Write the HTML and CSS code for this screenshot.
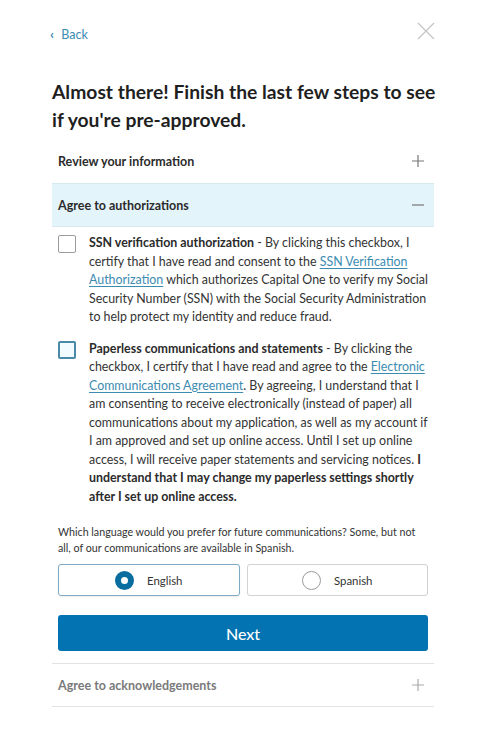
FILE: index.html
```html
<!DOCTYPE html>
<html lang="en">
<head>
<meta charset="utf-8">
<title>Almost there</title>
<link rel="stylesheet" href="styles.css">
</head>
<body>
<div class="page">
  <div class="topbar">
    <a class="back" href="#"><span class="chev">&#8249;</span> Back</a>
    <svg class="close" width="18" height="18" viewBox="0 0 18 18"><path d="M1 1 L17 17 M17 1 L1 17" stroke="#c4c4c4" stroke-width="1.2" fill="none"/></svg>
  </div>
  <h1 class="title">Almost there! Finish the last few steps to see if you're pre-approved.</h1>

  <div class="acc-row">
    <span class="acc-title">Review your information</span>
    <svg class="acc-icon" width="12" height="12" viewBox="0 0 12 12"><path d="M6 0 V12 M0 6 H12" stroke="#777" stroke-width="1.2"/></svg>
  </div>
  <div class="acc-row open">
    <span class="acc-title">Agree to authorizations</span>
    <svg class="acc-icon" width="12" height="12" viewBox="0 0 12 12"><path d="M0 6 H12" stroke="#777" stroke-width="1.2"/></svg>
  </div>

  <div class="acc-body">
    <div class="check-item">
      <span class="box"></span>
      <p class="check-text"><b>SSN verification authorization</b> - By clicking this checkbox, I certify that I have read and consent to the <a href="#">SSN Verification Authorization</a> which authorizes Capital One to verify my Social Security Number (SSN) with the Social Security Administration to help protect my identity and reduce fraud.</p>
    </div>
    <div class="check-item">
      <span class="box focus"></span>
      <p class="check-text"><b>Paperless communications and statements</b> - By clicking the checkbox, I certify that I have read and agree to the <a href="#">Electronic Communications Agreement</a>. By agreeing, I understand that I am consenting to receive electronically (instead of paper) all communications about my application, as well as my account if I am approved and set up online access. Until I set up online access, I will receive paper statements and servicing notices. <b>I understand that I may change my paperless settings shortly after I set up online access.</b></p>
    </div>

    <p class="question">Which language would you prefer for future communications? Some, but not all, of our communications are available in Spanish.</p>
    <div class="radios">
      <div class="radio selected"><span class="dot"></span><span class="rlabel">English</span></div>
      <div class="radio"><span class="dot"></span><span class="rlabel">Spanish</span></div>
    </div>
    <button class="next">Next</button>
  </div>

  <div class="acc-row closed">
    <span class="acc-title muted">Agree to acknowledgements</span>
    <svg class="acc-icon" width="12" height="12" viewBox="0 0 12 12"><path d="M6 0 V12 M0 6 H12" stroke="#aaa" stroke-width="1.2"/></svg>
  </div>
</div>
</body>
</html>
```

FILE: styles.css
```css
* { box-sizing: border-box; }
html, body { margin: 0; padding: 0; background: #fff; }
body {
  font-family: Lato, "Open Sans", sans-serif;
  color: #2b2b2b;
}
.page {
  width: 382px;
  margin-left: 52px;
}
.topbar {
  height: 62px;
  display: flex;
  justify-content: space-between;
  align-items: flex-start;
  padding-top: 21px;
}
.back {
  color: #3c8bb1;
  text-decoration: none;
  font-size: 12.5px;
  line-height: 26px;
  margin-left: -2px;
}
.chev { font-size: 14px; font-weight: bold; margin-right: 4px; }
.close { margin-right: -1px; margin-top: 1px; }
.title {
  margin: 16px -8px 5px 0;
  font-size: 19.3px;
  line-height: 28px;
  font-weight: 700;
  color: #1f1f1f;
}
.acc-row {
  height: 44px;
  display: flex;
  align-items: center;
  justify-content: space-between;
  padding: 0 10px 0 6px;
}
.acc-row.open {
  background: #e4f4fb;
  border-top: 1px solid #d6e8f0;
  border-bottom: 1px solid #d6e8f0;
}
.acc-row.closed {
  border-top: 1px solid #e3e3e3;
  border-bottom: 1px solid #e3e3e3;
}
.acc-title {
  font-size: 12.5px;
  font-weight: 700;
  color: #2b2b2b;
}
.acc-title.muted { color: #7a7a7a; }
.acc-body {
  padding: 7px 6px 12px 6px;
}
.check-item {
  display: flex;
  gap: 13px;
  margin-bottom: 13px;
}
.box {
  flex: none;
  width: 18px;
  height: 18px;
  border: 1.5px solid #9a9a9a;
  border-radius: 2px;
  margin-top: 1px;
}
.box.focus {
  border: 2px solid #4a89a8;
  background: #f2fbff;
}
.check-text {
  margin: 0;
  font-size: 12.4px;
  line-height: 18.5px;
  color: #333;
}
.check-text b { font-weight: 700; color: #2b2b2b; }
.check-text a { color: #3c8bb1; text-decoration: underline; text-underline-offset: 2px; }
.question {
  margin: 18px 0 8px 0;
  font-size: 10.7px;
  line-height: 16px;
  color: #333;
}
.radios {
  display: flex;
  gap: 7px;
}
.radio {
  flex: 1;
  height: 32px;
  border: 1px solid #d2d2d2;
  border-radius: 3px;
  display: flex;
  align-items: center;
  justify-content: center;
  gap: 13px;
  font-size: 11.4px;
  color: #333;
}
.radio.selected {
  border-color: #7eaac3;
  box-shadow: 0 1px 2px rgba(0,0,0,0.08);
}
.dot {
  width: 19px;
  height: 19px;
  border-radius: 50%;
  border: 1px solid #9a9a9a;
}
.radio.selected .dot {
  border: 6px solid #0a6d9f;
  background: #fff;
}
.next {
  display: block;
  width: 100%;
  height: 36px;
  margin-top: 19px;
  border: none;
  border-radius: 3px;
  background: #0373b1;
  color: #fff;
  font-family: Lato, "Open Sans", sans-serif;
  font-size: 16px;
  font-weight: 500;
}
```
